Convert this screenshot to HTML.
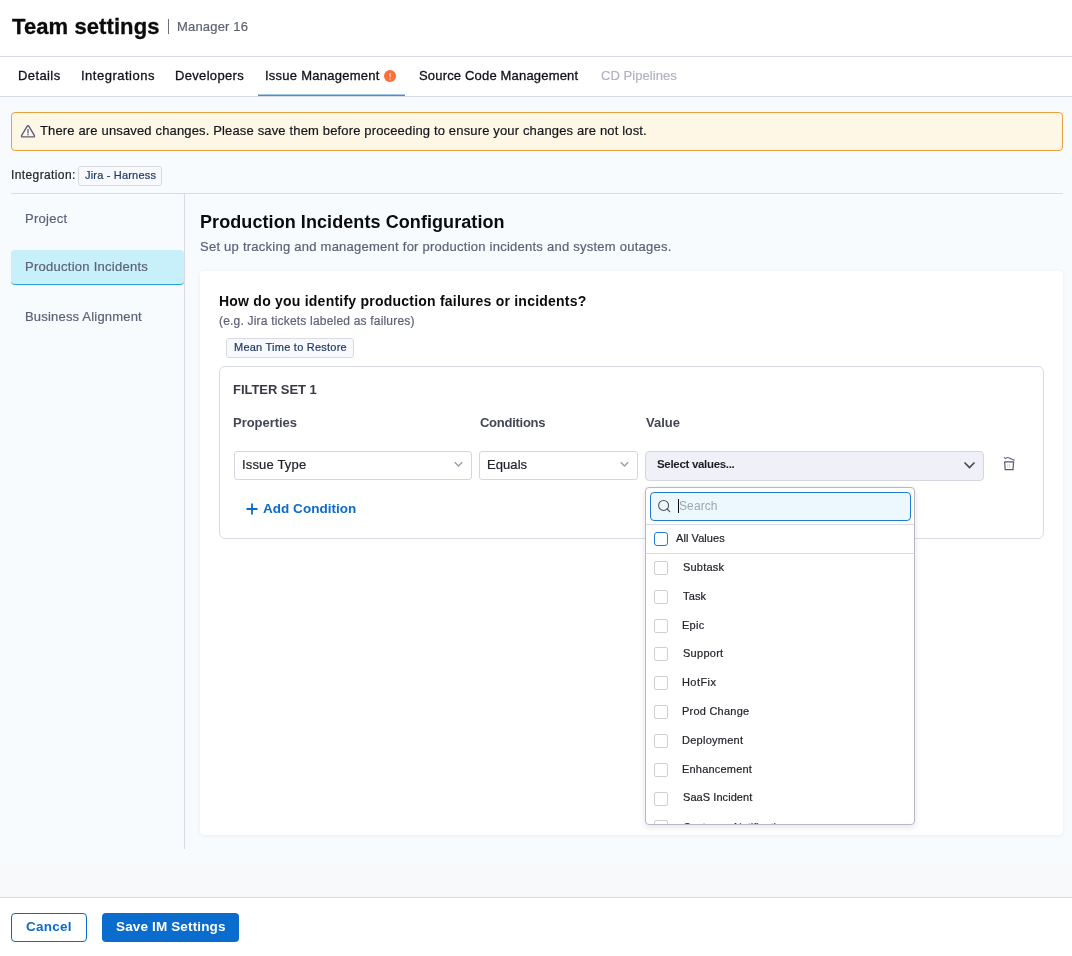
<!DOCTYPE html>
<html><head><meta charset="utf-8">
<style>
*{box-sizing:border-box;margin:0;padding:0}
html,body{width:1072px;height:956px;overflow:hidden;background:#fff;-webkit-font-smoothing:antialiased;font-family:"Liberation Sans",sans-serif;color:#1c1c28}
.a{position:absolute;white-space:nowrap}
.t{position:absolute;white-space:nowrap;line-height:1;will-change:transform}
#hdr{position:absolute;left:0;top:0;width:1072px;height:57px;background:#fff;border-bottom:1px solid #d9dae6}
#tabs{position:absolute;left:0;top:57px;width:1072px;height:40px;background:#fff;border-bottom:1px solid #d9dae6}
#main{position:absolute;left:0;top:97px;width:1072px;height:801px;background:linear-gradient(#f8fbfe 0px,#f8fbfe 760px,#f8f9fa 769px,#f8f9fa 800px);border-bottom:1px solid #d9dae6}
#footer{position:absolute;left:0;top:898px;width:1072px;height:58px;background:#fff}
.tab{position:absolute;top:69px;font-size:13px;color:#1c1c28;line-height:1;white-space:nowrap}
.side{position:absolute;left:26px;font-size:13px;color:#5d6178;line-height:1;white-space:nowrap}
.sel{position:absolute;height:29px;border:1px solid #d5d6e2;border-radius:3px;background:#fff}
.chev{position:absolute}
.cb{position:absolute;left:654px;width:14px;height:14px;border:1px solid #cfd0d6;border-radius:2px;background:#fff}
.it{position:absolute;left:683px;font-size:11px;color:#22222a;line-height:1;white-space:nowrap}
</style></head><body>
<div id="hdr"></div>
<div id="tabs"></div>
<div id="main"></div>
<div id="footer"></div>

<!-- header -->
<div class="a" style="left:168px;top:19px;width:1px;height:15px;background:#6b6d85"></div>

<!-- tabs -->
<svg class="a" style="left:384px;top:70px" width="12" height="12" viewBox="0 0 12 12"><circle cx="6" cy="6" r="6" fill="#ff6d38"/><path d="M6 3 V7.3" stroke="#ffe6da" stroke-width="1.2"/><path d="M6 8.5 V9.8" stroke="#ffe6da" stroke-width="1.2"/></svg>
<div class="a" style="left:258px;top:95px;width:147px;height:1px;background:#3f91d8;box-shadow:0 -1px 0 rgba(63,145,216,0.5)"></div>

<!-- banner -->
<div class="a" style="left:11px;top:112px;width:1052px;height:39px;border:1px solid #e8a040;border-radius:4px;background:#fff7e6"></div>
<svg class="a" style="left:20px;top:123px" width="16" height="16" viewBox="0 0 16 16"><path d="M6.9 3.6 Q8 1.9 9.1 3.6 L14.3 12.4 Q15 13.9 13.4 13.9 L2.6 13.9 Q1 13.9 1.7 12.4 Z" fill="none" stroke="#5d5f7b" stroke-width="1.4" stroke-linejoin="round"/><path d="M8 6.6 V9.9" stroke="#5d5f7b" stroke-width="1.3" stroke-linecap="round"/><circle cx="8" cy="11.8" r="0.75" fill="#5d5f7b"/></svg>

<!-- integration -->
<div class="a" style="left:78px;top:166px;width:84px;height:20px;border:1px solid #d9dae6;border-radius:3px;background:#f8f9fc"></div>

<div class="a" style="left:11px;top:193px;width:1052px;height:1px;background:#d9dae6"></div>
<div class="a" style="left:184px;top:194px;width:1px;height:655px;background:#d9dae6"></div>

<!-- sidebar -->
<div class="a" style="left:11px;top:250px;width:173px;height:35px;border-radius:4px;background:#c7f0fa;border-bottom:1.5px solid #2aa4d8"></div>

<!-- title -->

<!-- card -->
<div class="a" style="left:200px;top:271px;width:863px;height:564px;background:#fff;border-radius:4px;box-shadow:0 1px 4px rgba(20,30,60,0.07)"></div>
<div class="a" style="left:226px;top:338px;width:128px;height:20px;border:1px solid #d9dae6;border-radius:3px;background:#f8f9fc"></div>

<!-- filter set -->
<div class="a" style="left:219px;top:366px;width:825px;height:173px;border:1px solid #d9dae6;border-radius:6px;background:#fff"></div>

<div class="sel" style="left:234px;top:451px;width:238px"></div>
<svg class="chev" style="left:454px;top:460px" width="10" height="8" viewBox="0 0 10 8"><path d="M0.8 2.3 L4.5 6 L8.2 2.3" fill="none" stroke="#9a9caf" stroke-width="1.4"/></svg>

<div class="sel" style="left:479px;top:451px;width:159px"></div>
<svg class="chev" style="left:620px;top:460px" width="10" height="8" viewBox="0 0 10 8"><path d="M0.8 2.3 L4.5 6 L8.2 2.3" fill="none" stroke="#9a9caf" stroke-width="1.4"/></svg>

<div class="a" style="left:645px;top:451px;width:339px;height:30px;border:1.5px solid #d5d6e0;border-radius:4px;background:#f0f0f8"></div>
<svg class="chev" style="left:963px;top:460px" width="13" height="10" viewBox="0 0 13 10"><path d="M1.5 2.5 L6.5 7.6 L11.5 2.5" fill="none" stroke="#3e4654" stroke-width="1.5"/></svg>

<!-- trash -->
<svg class="a" style="left:1002px;top:456px" width="14" height="15" viewBox="0 0 14 15"><path d="M2.3 1.6 L3.6 2.6 Q5.8 0.6 7.6 2.2 L12.4 4.3" fill="none" stroke="#60627a" stroke-width="1.1" stroke-linecap="round" stroke-linejoin="round"/><path d="M2.6 5.8 H11.6 L11 13.6 H3.2 Z" fill="none" stroke="#55576e" stroke-width="1.2" stroke-linejoin="round"/><path d="M5.8 8 V11.8 M7.6 8 V11.8" stroke="#c9cad6" stroke-width="0.8"/></svg>
<!-- add condition -->
<svg class="a" style="left:246px;top:503px" width="12" height="12" viewBox="0 0 12 12"><path d="M6 0.5 V11.5 M0.5 6 H11.5" stroke="#0b6bcb" stroke-width="1.8"/></svg>

<!-- dropdown -->
<div class="a" style="left:645px;top:487px;width:270px;height:338px;border:1px solid #b6b8c8;border-radius:4px;background:#fff;box-shadow:0 2px 6px rgba(30,30,60,0.12);overflow:hidden">
</div>
<div class="a" style="left:650px;top:492px;width:261px;height:29px;border:1.5px solid #1f7ad6;border-radius:4px;background:#ecf8fe"></div>
<svg class="a" style="left:656px;top:498px" width="16" height="16" viewBox="0 0 16 16"><circle cx="7.6" cy="7.4" r="5" fill="none" stroke="#50525f" stroke-width="1.05"/><path d="M11.2 11 L13.7 13.6" stroke="#50525f" stroke-width="1.2" stroke-linecap="round"/></svg>
<div class="a" style="left:678px;top:499px;width:1px;height:14px;background:#111"></div>
<div class="a" style="left:646px;top:524px;width:268px;height:1px;background:#d9dae6"></div>
<div class="a" style="left:654px;top:532px;width:14px;height:14px;border:1.3px solid #1f7ad6;border-radius:3px;background:#fff"></div>
<div class="a" style="left:646px;top:553px;width:268px;height:1px;background:#d9dae6"></div>

<div class="cb" style="top:561px"></div>
<div class="cb" style="top:590px"></div>
<div class="cb" style="top:619px"></div>
<div class="cb" style="top:647px"></div>
<div class="cb" style="top:676px"></div>
<div class="cb" style="top:705px"></div>
<div class="cb" style="top:734px"></div>
<div class="cb" style="top:763px"></div>
<div class="cb" style="top:792px"></div>
<div class="a" style="left:646px;top:815px;width:268px;height:9px;overflow:hidden">
  <div class="cb" style="left:8px;top:5px"></div><div class="it" style="left:37px;top:7px">Customer Notification</div>
</div>

<!-- footer -->
<div class="a" style="left:11px;top:913px;width:76px;height:29px;border:1px solid #0b6bcb;border-radius:4px;background:#fff"></div>
<div class="a" style="left:102px;top:913px;width:137px;height:29px;border-radius:4px;background:#0a6ccc"></div>
<div class="t" id="ts" style="left:12.00px;top:15.64px;font-size:22px;color:#0b0b0d;letter-spacing:0.092px;font-weight:bold;-webkit-text-stroke:0.3px">Team settings</div>
<div class="t" id="mgr" style="left:177.20px;top:19.51px;font-size:13px;color:#5f6274;letter-spacing:0.180px;-webkit-text-stroke:0.2px">Manager 16</div>
<div class="t" id="tab1" style="left:17.82px;top:69.00px;font-size:13px;color:#111118;letter-spacing:0.400px;-webkit-text-stroke:0.3px">Details</div>
<div class="t" id="tab2" style="left:80.58px;top:69.00px;font-size:13px;color:#111118;letter-spacing:0.502px;-webkit-text-stroke:0.3px">Integrations</div>
<div class="t" id="tab3" style="left:174.82px;top:69.00px;font-size:13px;color:#111118;letter-spacing:0.327px;-webkit-text-stroke:0.3px">Developers</div>
<div class="t" id="tab4" style="left:264.58px;top:69.00px;font-size:13px;color:#111118;letter-spacing:0.252px;-webkit-text-stroke:0.3px">Issue Management</div>
<div class="t" id="tab5" style="left:419.24px;top:69.00px;font-size:13px;color:#111118;letter-spacing:0.177px;-webkit-text-stroke:0.3px">Source Code Management</div>
<div class="t" id="tab6" style="left:600.80px;top:68.80px;font-size:13px;color:#b0b1c4;letter-spacing:0.050px;-webkit-text-stroke:0.2px">CD Pipelines</div>
<div class="t" id="ban" style="left:40.28px;top:124.48px;font-size:13px;color:#15151c;letter-spacing:0.153px;-webkit-text-stroke:0.2px">There are unsaved changes. Please save them before proceeding to ensure your changes are not lost.</div>
<div class="t" id="intl" style="left:10.85px;top:169.49px;font-size:12px;color:#22222a;letter-spacing:0.388px;-webkit-text-stroke:0.2px">Integration:</div>
<div class="t" id="jira" style="left:85.22px;top:170.03px;font-size:11px;color:#1e3a64;letter-spacing:0.186px;-webkit-text-stroke:0.2px">Jira - Harness</div>
<div class="t" id="s1" style="left:25.20px;top:212.20px;font-size:13px;color:#5d6178;letter-spacing:0.280px;-webkit-text-stroke:0.2px">Project</div>
<div class="t" id="s2" style="left:25.26px;top:260.19px;font-size:13px;color:#5d6178;letter-spacing:0.265px;-webkit-text-stroke:0.2px">Production Incidents</div>
<div class="t" id="s3" style="left:25.26px;top:309.81px;font-size:13px;color:#5d6178;letter-spacing:0.191px;-webkit-text-stroke:0.2px">Business Alignment</div>
<div class="t" id="title" style="left:199.58px;top:212.97px;font-size:18px;color:#0b0b0d;letter-spacing:0.079px;font-weight:bold">Production Incidents Configuration</div>
<div class="t" id="sub" style="left:199.58px;top:239.73px;font-size:13px;color:#5d6178;letter-spacing:0.247px;-webkit-text-stroke:0.2px">Set up tracking and management for production incidents and system outages.</div>
<div class="t" id="q" style="left:218.58px;top:294.20px;font-size:14px;color:#0b0b0d;letter-spacing:0.228px;font-weight:bold">How do you identify production failures or incidents?</div>
<div class="t" id="hint" style="left:218.58px;top:315.30px;font-size:12px;color:#5d6178;letter-spacing:0.195px;-webkit-text-stroke:0.2px">(e.g. Jira tickets labeled as failures)</div>
<div class="t" id="mttr" style="left:233.64px;top:342.09px;font-size:11px;color:#1e3a64;letter-spacing:0.238px;-webkit-text-stroke:0.2px">Mean Time to Restore</div>
<div class="t" id="fs" style="left:233.36px;top:382.79px;font-size:13px;color:#383946;letter-spacing:-0.042px;font-weight:bold">FILTER SET 1</div>
<div class="t" id="props" style="left:233.36px;top:415.51px;font-size:13px;color:#434656;letter-spacing:-0.036px;font-weight:bold">Properties</div>
<div class="t" id="conds" style="left:480.00px;top:415.51px;font-size:13px;color:#434656;letter-spacing:-0.267px;font-weight:bold">Conditions</div>
<div class="t" id="val" style="left:645.62px;top:415.51px;font-size:13px;color:#434656;letter-spacing:0.020px;font-weight:bold">Value</div>
<div class="t" id="itype" style="left:241.88px;top:458.48px;font-size:13px;color:#22222a;letter-spacing:0.164px;-webkit-text-stroke:0.2px">Issue Type</div>
<div class="t" id="eq" style="left:486.76px;top:458.48px;font-size:13px;color:#22222a;letter-spacing:0.068px;-webkit-text-stroke:0.2px">Equals</div>
<div class="t" id="selv" style="left:657.36px;top:459.46px;font-size:11.5px;color:#1c1c28;letter-spacing:-0.311px;font-weight:bold">Select values...</div>
<div class="t" id="addc" style="left:263.18px;top:502.11px;font-size:13.5px;color:#0b6bcb;letter-spacing:0.033px;font-weight:bold">Add Condition</div>
<div class="t" id="srch" style="left:679.00px;top:500.00px;font-size:12px;color:#9ea6b2;letter-spacing:0.100px">Search</div>
<div class="t" id="allv" style="left:675.50px;top:533.42px;font-size:11px;color:#22222a;letter-spacing:0.071px;-webkit-text-stroke:0.2px">All Values</div>
<div class="t" id="cancel" style="left:26.32px;top:920.23px;font-size:13.5px;color:#0b6bcb;letter-spacing:0.256px;font-weight:bold">Cancel</div>
<div class="t" id="save" style="left:115.64px;top:920.23px;font-size:13.5px;color:#fff;letter-spacing:0.147px;font-weight:bold">Save IM Settings</div>
<div class="t" id="it0" style="left:682.88px;top:561.92px;font-size:11px;color:#22222a;letter-spacing:0.203px;-webkit-text-stroke:0.2px">Subtask</div>
<div class="t" id="it1" style="left:682.68px;top:591.10px;font-size:11px;color:#22222a;letter-spacing:0.153px;-webkit-text-stroke:0.2px">Task</div>
<div class="t" id="it2" style="left:681.88px;top:619.62px;font-size:11px;color:#22222a;letter-spacing:0.247px;-webkit-text-stroke:0.2px">Epic</div>
<div class="t" id="it3" style="left:682.88px;top:648.20px;font-size:11px;color:#22222a;letter-spacing:0.273px;-webkit-text-stroke:0.2px">Support</div>
<div class="t" id="it4" style="left:681.88px;top:676.52px;font-size:11px;color:#22222a;letter-spacing:0.420px;-webkit-text-stroke:0.2px">HotFix</div>
<div class="t" id="it5" style="left:681.88px;top:706.36px;font-size:11px;color:#22222a;letter-spacing:0.228px;-webkit-text-stroke:0.2px">Prod Change</div>
<div class="t" id="it6" style="left:681.88px;top:735.44px;font-size:11px;color:#22222a;letter-spacing:0.256px;-webkit-text-stroke:0.2px">Deployment</div>
<div class="t" id="it7" style="left:681.88px;top:763.52px;font-size:11px;color:#22222a;letter-spacing:0.194px;-webkit-text-stroke:0.2px">Enhancement</div>
<div class="t" id="it8" style="left:682.88px;top:791.72px;font-size:11px;color:#22222a;letter-spacing:0.065px;-webkit-text-stroke:0.2px">SaaS Incident</div>
</body></html>
